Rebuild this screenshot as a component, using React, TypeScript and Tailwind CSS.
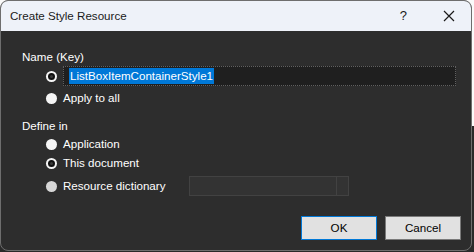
import React from "react";

function Radio({ checked = false, disabled = false }: { checked?: boolean; disabled?: boolean }) {
  return (
    <span
      className={`flex h-[11px] w-[11px] shrink-0 items-center justify-center rounded-full ${
        disabled ? "bg-[#d6d6d6]" : "bg-[#f5f5f5]"
      }`}
    >
      {checked && <span className="h-[7px] w-[7px] rounded-full border-[2px] border-[#111] bg-[#3a3a3a]" />}
    </span>
  );
}

function RadioRow({
  label,
  checked,
  disabled,
  className = "",
  children,
}: {
  label?: string;
  checked?: boolean;
  disabled?: boolean;
  className?: string;
  children?: React.ReactNode;
}) {
  return (
    <div className={`flex items-center pl-[45px] ${className}`}>
      <Radio checked={checked} disabled={disabled} />
      <div className="ml-[6px] flex items-center">
        {label && <span className="text-white">{label}</span>}
        {children}
      </div>
    </div>
  );
}

export default function App() {
  return (
    <div className="h-[252px] w-[474px] bg-[linear-gradient(#fafafa_50%,#2a2a2a_50%)] text-[11.6px] leading-[16px] font-['Liberation_Sans',Arial,sans-serif]">
      <div className="flex h-[251px] w-[472px] flex-col overflow-hidden rounded-[8px] border border-[#6e6e6e] bg-[#2d2d2d]">
        {/* title bar */}
        <div className="flex h-[30px] shrink-0 items-center bg-[#eef2f9] pl-[9px] text-[#1a1a1a]">
          <span>Create Style Resource</span>
          <span className="ml-auto mr-[36px] text-[13px]">?</span>
          <svg width="12" height="12" viewBox="0 0 12 12" className="mr-[16px]">
            <path d="M1 1L11 11M11 1L1 11" stroke="#1a1a1a" strokeWidth="1.2" />
          </svg>
        </div>

        {/* body */}
        <div className="flex flex-1 flex-col pt-[18px]">
          <div className="pl-[21px] text-white">Name (Key)</div>

          <RadioRow checked className="mt-[1px] h-[20px]">
            <div className="flex h-[20px] w-[393px] items-center border border-dotted border-[#606060] bg-[#1f1f1f] pl-[5px]">
              <span className="bg-[#0078d7] px-[1px] text-white">ListBoxItemContainerStyle1</span>
            </div>
          </RadioRow>

          <RadioRow label="Apply to all" className="mt-[4px] h-[16px]" />

          <div className="mt-[12px] pl-[21px] text-white">Define in</div>

          <RadioRow label="Application" className="mt-[2px] h-[16px]" />
          <RadioRow label="This document" checked className="mt-[3px] h-[16px]" />
          <RadioRow label="Resource dictionary" disabled className="mt-[5px] h-[20px]">
            <div className="ml-[24px] flex h-[20px] w-[160px] border border-[#424242] bg-[#333333]">
              <div className="flex-1" />
              <div className="w-[12px] border-l border-[#424242]" />
            </div>
          </RadioRow>

          <div className="mt-[20px] flex justify-end gap-[8px] pr-[10px]">
            <button className="h-[24px] w-[76px] border border-[#0078d7] bg-[#e1e1e1] text-black">OK</button>
            <button className="h-[24px] w-[76px] border border-[#7a7a7a] bg-[#e1e1e1] text-black">Cancel</button>
          </div>
        </div>
      </div>
    </div>
  );
}
